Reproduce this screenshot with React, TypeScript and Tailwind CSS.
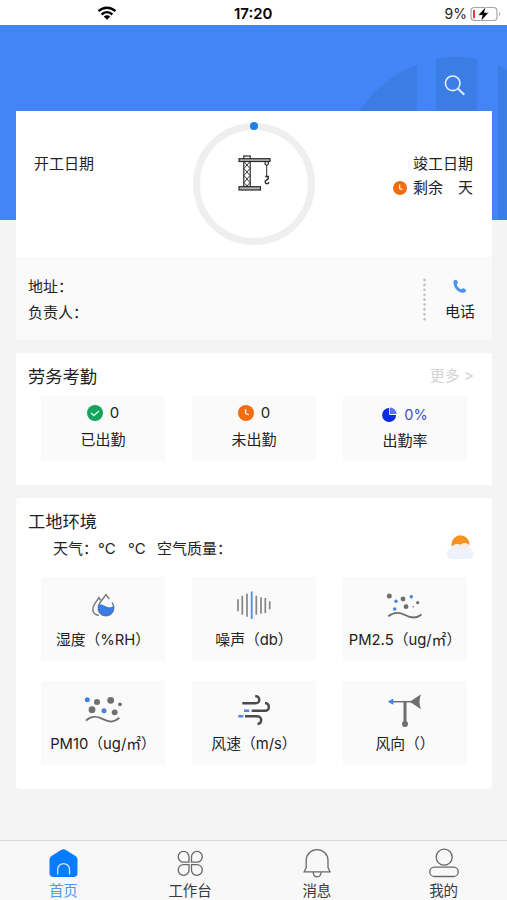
import type { ReactNode } from "react"

const GRAY = "#6f6f6f"
const BLUE = "#4680e0"

const ClockIcon = ({ size }: { size: number }) => (
  <svg width={size} height={size} viewBox="0 0 16 16" fill="none">
    <circle cx="8" cy="8" r="8" fill="#f36c12" />
    <path d="M7.6 4v4.6l3.2 1.3" stroke="#fff" strokeOpacity=".85" strokeWidth="1.5" />
  </svg>
)

const CheckIcon = () => (
  <svg width="16" height="16" viewBox="0 0 16 16" fill="none">
    <circle cx="8" cy="8" r="8" fill="#12a45f" />
    <path d="m4.2 7.9 2.6 2.6 5.2-4.6" stroke="#d9f5e6" strokeWidth="1.4" />
  </svg>
)

const PieIcon = () => (
  <svg className="-mt-[2px]" width="15" height="15" viewBox="0 0 15 15">
    <path d="M7.200 1v6.900h6.900A7 7 0 1 1 7.200 1Z" fill="#0b2fe0" />
    <path d="M8 .5a6.600 6.600 0 0 1 6.500 6.500H8Z" fill="#5a73ee" />
  </svg>
)

const CraneIcon = () => (
  <svg width="34" height="36" viewBox="0 0 34 36" fill="none" stroke="#2b2b2b" strokeWidth="1.2">
    <rect x="6.800" y="1" width="6.400" height="30.500" />
    <path d="m7 6.500 6 7-6 7 6 7-3 3.500M13 6.500l-6 7 6 7-6 7 3 3.500" strokeWidth=".9" />
    <rect x="2" y="3.700" width="31" height="2.800" fill="#b5b5b5" />
    <rect x="2" y="31.700" width="21.500" height="3.300" fill="#b5b5b5" />
    <circle cx="29.700" cy="8.300" r="1.800" />
    <path d="M29.700 10v11" strokeWidth="1" />
    <path d="M28.200 21.500h3v2.300l-2.900 2.200c-.8 3.400 3.300 3.400 3.500 1" strokeWidth="1.400" />
  </svg>
)

const HumidityIcon = () => (
  <svg width="40" height="34" viewBox="0 0 40 34" fill="none">
    <path d="M17.500 12.300 16 9.700c-2.200 3.200-6.200 7.300-6.200 11.600 0 3.200 2.300 5.700 6 5.900" stroke="#7a7a7a" strokeWidth="1.500" />
    <path d="M15.500 18c1-4 5-7.500 7.500-11.300 1.100 1.700 2.200 3 3.400 4.400M29.200 14.700c1.200 1.800 1.800 3.500 1.600 5.700" stroke="#7a7a7a" strokeWidth="1.500" />
    <path d="M14.800 17.300c2.700-1.300 5-.6 7.600.9 2.900 1.600 5.800 1.400 8.600-.8.800 6.900-3.200 10.800-8.100 10.800-5.100 0-9-4-8.100-10.900Z" fill="#3c7be6" />
    <path d="M15 21c.7 4.200 3.800 6.800 7.900 6.800s7-2.600 7.900-6.800" stroke="#5a6d94" strokeWidth="1" />
  </svg>
)

const NoiseIcon = () => (
  <svg width="40" height="34" viewBox="0 0 40 34" fill="none" stroke="#858585" strokeWidth="1.700">
    <path d="M4 11.300v12M8.300 7.800v19M13 5.800v23M22.300 7.800v19M27 9.300v16.500M31.300 10v15M35.700 13.300v8" />
    <path d="M17.700 3.500v27.500" stroke="#5b8fd8" strokeWidth="1.900" />
  </svg>
)

const Pm25Icon = () => (
  <svg width="40" height="34" viewBox="0 0 40 34" fill={GRAY}>
    <circle cx="4.300" cy="8" r="2.500" />
    <circle cx="18" cy="11" r="2.400" />
    <circle cx="32.700" cy="14.700" r="1.600" />
    <circle cx="21" cy="18.700" r="2.400" />
    <circle cx="28.300" cy="18.700" r=".8" />
    <g fill={BLUE}>
      <circle cx="11" cy="13.300" r="1.700" />
      <circle cx="26.300" cy="8.700" r="1.700" />
      <circle cx="9.700" cy="21" r="1.700" />
    </g>
    <path d="M3.300 28.300C9 23.800 14 23.800 20 27s11 4 16.500-.5" fill="none" stroke={GRAY} strokeWidth="1.900" />
  </svg>
)

const Pm10Icon = () => (
  <svg width="40" height="34" viewBox="0 0 40 34" fill={GRAY}>
    <circle cx="14" cy="10" r="3" />
    <circle cx="27.700" cy="8.300" r="3.400" />
    <circle cx="37" cy="12.300" r="1.900" />
    <circle cx="9" cy="17.700" r="3.400" />
    <circle cx="31.700" cy="20.300" r="2.900" />
    <circle cx="4.300" cy="7.700" r="2.500" fill={BLUE} />
    <circle cx="21" cy="18.700" r="2.500" fill={BLUE} />
    <path d="M3 28.700C8 23.500 13 23.700 20 27.200s11 3.300 16.300-1.500" fill="none" stroke={GRAY} strokeWidth="1.900" />
  </svg>
)

const WindIcon = () => (
  <svg width="40" height="34" viewBox="0 0 40 34" fill="none" stroke="#4a4a4a" strokeWidth="2.400">
    <path d="M8.300 11.300h13.200c5.200 0 4.900-6.800-.3-7.300M17.700 18.700H31c5.300 0 5-7.200 0-7.700M11 24.300h12.300c5.300 0 5 7.300.2 7.700" />
    <path d="M10 18.700h5.300M4.300 24.300h5" stroke="#4f86ea" />
  </svg>
)

const WindDirectionIcon = () => (
  <svg width="40" height="36" viewBox="0 0 40 36" fill={GRAY}>
    <path d="M7 9.700h20" stroke={GRAY} strokeWidth="1.500" />
    <path d="m2.800 9.700 5.500-3.100v6.200Z" fill={BLUE} />
    <path d="M24.800 9.700 36 2.200c-2 5-2 10 0 15Z" />
    <path d="M18.500 9.700h3v20h-3Z" />
    <circle cx="20" cy="32" r="3" />
  </svg>
)

const WeatherIcon = () => (
  <svg width="30" height="28" viewBox="0 0 30 28">
    <circle cx="15.500" cy="10.300" r="9" fill="#f7921e" />
    <path d="M6.500 25a5 5 0 0 1-.6-9.900c1.300-4.900 6-6 9.300-4.200 4.300-3.800 10.600-1 10.500 4.200A5.200 5.200 0 0 1 23.500 25Z" fill="#edf2fb" />
    <path d="M10.500 10.800c1.700-.5 3.400-.4 4.700.1 3.200-2.600 7.300-2 9.200.3-1 3-4.800 3.700-7.400 4.200-2-.3-5-2-6.500-4.600Z" fill="#fbeae1" />
  </svg>
)

const attendance = [
  { label: "已出勤", value: "0", icon: <CheckIcon /> },
  { label: "未出勤", value: "0", icon: <ClockIcon size={16} /> },
]

const environment = [
  { label: "湿度（%RH）", icon: <HumidityIcon /> },
  { label: "噪声（db）", icon: <NoiseIcon /> },
  { label: "PM2.5（ug/㎡）", icon: <Pm25Icon /> },
  { label: "PM10（ug/㎡）", icon: <Pm10Icon /> },
  { label: "风速（m/s）", icon: <WindIcon /> },
  { label: "风向（）", icon: <WindDirectionIcon /> },
]

const StatusBar = () => (
  <div className="flex h-[25px] items-center bg-white pl-[97px] pr-[6px] text-black">
    <svg width="20" height="14" viewBox="0 0 20 14" fill="none" stroke="#000" strokeWidth="2.400">
      <path d="M1.500 5.200c5-4.700 12-4.700 17 0M4.600 8.500c3.200-3 7.600-3 10.800 0" />
      <path d="M10 13.800 6.700 10.500c2-1.700 4.600-1.700 6.600 0Z" fill="#000" stroke="none" />
    </svg>
    <span className="ml-[117px] mt-[2px] text-[15px] font-semibold leading-none">17:20</span>
    <span className="ml-auto mr-[3px] mt-[3px] text-[14px] leading-none text-[#222]">9%</span>
    <svg className="mt-[2px]" width="31" height="16" viewBox="0 0 31 16" fill="none">
      <rect x="1" y="1.500" width="26" height="13" rx="3.500" stroke="#a5a5a5" strokeWidth="1.200" />
      <path d="M29 6v4c1.500-.8 1.500-3.200 0-4Z" fill="#a5a5a5" />
      <rect x="3" y="3.700" width="2" height="8.600" rx=".8" fill="#f0353c" />
      <path d="M15.800.8 8 9.300h4.400L10.600 15.400l8.200-8.800h-4.400Z" fill="#000" stroke="#fff" strokeWidth=".6" />
    </svg>
  </div>
)

const Header = () => (
  <header className="relative h-[195px] overflow-hidden bg-[#4285f6]">
    <svg className="absolute inset-0" width="507" height="195" viewBox="0 25 507 195" fill="#3c7ce5">
      <path d="M417 65a116 116 0 0 0-76 108h76ZM436 59c14-3 27-3 41 0v161h-41ZM498 65l9 5v150h-9Z" />
    </svg>
    <svg className="absolute left-[443px] top-[49px]" width="24" height="24" viewBox="0 0 24 24" fill="none" stroke="#e3f0ff" strokeWidth="1.600">
      <circle cx="9.700" cy="9.300" r="7.300" />
      <path d="m14.800 14.500 6.500 6.200" strokeWidth="1.900" />
    </svg>
  </header>
)

const Tile = ({ children }: { children: ReactNode }) => (
  <div className="flex w-[124px] flex-col items-center whitespace-nowrap bg-[#fafafa]">{children}</div>
)

const Tab = ({ label, active, children }: { label: string; active?: boolean; children: ReactNode }) => (
  <div className="flex flex-1 flex-col items-center pt-[6px]">
    <svg className="shrink-0" width="32" height="32" viewBox="0 0 32 32" fill="none" stroke="#686868" strokeWidth="1.300">
      {children}
    </svg>
    <span className={active ? "mt-[2px] text-[14.500px] leading-[20px] text-[#4a98ee]" : "mt-[2px] text-[14.500px] leading-[20px] text-[#3a3a3a]"}>{label}</span>
  </div>
)

export default function App() {
  return (
    <div lang="zh-CN" className="flex h-[900px] w-[507px] flex-col overflow-hidden bg-[#f4f4f4] font-[Inter,'Noto_Sans_CJK_SC',sans-serif] text-[15px] text-[#222]">
      <StatusBar />
      <Header />

      <main className="relative -mt-[109px] flex flex-1 flex-col gap-[13px] pl-4 pr-[15px]">
        {/* Project */}
        <section className="h-[229px] bg-[#fafafa]">
          <div className="flex h-[146px] justify-between bg-white pl-[18px] pr-[19px]">
            <div className="w-[82px] pt-[42px] leading-[22px]">开工日期</div>
            <div className="relative ml-[18px] mt-3 flex h-[122px] w-[122px] justify-center rounded-full border-[7px] border-[#efefef] pt-[25px]">
              <CraneIcon />
              <div className="absolute -top-[8px] left-[50px] h-2 w-2 rounded-full bg-[#1f80e0]" />
            </div>
            <div className="flex w-[100px] flex-col items-end pt-[42px] leading-[22px]">
              <div>竣工日期</div>
              <div className="mt-[2px] flex items-center gap-[6px]">
                <ClockIcon size={14} />
                <span>剩余　天</span>
              </div>
            </div>
          </div>
          <div className="flex h-[83px] justify-between pl-3 pr-[17px]">
            <div className="pt-[17px] leading-[26px]">
              <div>地址：</div>
              <div>负责人：</div>
            </div>
            <div className="flex gap-[19px]">
              <svg className="mt-[21px]" width="3" height="44" viewBox="0 0 3 44">
                <path d="M1.500 2v41" stroke="#bdbdbd" strokeWidth="2.600" strokeLinecap="round" strokeDasharray="0 4.900" />
              </svg>
              <div className="flex flex-col items-center pt-[22px]">
                <svg width="15" height="15" viewBox="0 0 15 15">
                  <path d="M1.800 1.600C3.700-.1 4.800.9 5.700 2.800c.7 1.500-1 2-1 3 .7 1.900 2.300 3.600 4.200 4.400 1.100.1 1.700-1.600 3.200-.8 2.200 1.200 2.800 2.300.8 3.800C7.500 16 0 7.800 1.800 1.600Z" fill="#4a93ee" />
                </svg>
                <span className="mt-[7px] leading-[22px]">电话</span>
              </div>
            </div>
          </div>
        </section>

        {/* Attendance */}
        <section className="h-[132px] bg-white">
          <div className="flex justify-between pl-3 pr-[18px] pt-[12px] leading-[24px]">
            <h2 className="text-[17.300px]">劳务考勤</h2>
            <span className="-mt-[1px] text-[#d4d4d4]">更多 &gt;</span>
          </div>
          <div className="mt-[7px] flex h-[65px] justify-between px-[25px]">
            {attendance.map((item) => (
              <Tile key={item.label}>
                <div className="flex items-center gap-[7px] pt-[6px] leading-[22px]">
                  {item.icon}
                  <span>{item.value}</span>
                </div>
                <div className="mt-[5px] leading-[22px]">{item.label}</div>
              </Tile>
            ))}
            <Tile>
              <div className="flex items-center gap-[7px] pt-[8px] leading-[22px] text-[#3850cf]">
                <PieIcon />
                <span className="text-[14.500px]">0%</span>
              </div>
              <div className="mt-[4px] leading-[22px]">出勤率</div>
            </Tile>
          </div>
        </section>

        {/* Environment */}
        <section className="h-[291px] rounded bg-white">
          <h2 className="pl-3 pt-[12px] text-[17.300px] leading-[24px]">工地环境</h2>
          <div className="flex h-[31px] justify-between pl-[37px] pr-[17px]">
            <div className="flex whitespace-pre pt-[4px] leading-[22px]">
              <span>天气：</span>
              <span className="w-[30px]">°C</span>
              <span className="w-[29px]">°C</span>
              <span>空气质量：</span>
            </div>
            <WeatherIcon />
          </div>
          <div className="mt-[12px] flex flex-wrap justify-between gap-y-5 px-[25px]">
            {environment.map((item) => (
              <Tile key={item.label}>
                <div className="h-[84px] pt-[11px]">
                  <div className="flex h-[34px] justify-center">{item.icon}</div>
                  <div className="mt-[7px] text-[14.800px] leading-[22px]">{item.label}</div>
                </div>
              </Tile>
            ))}
          </div>
        </section>
      </main>

      <nav className="flex h-[60px] shrink-0 border-t border-[#d9d9d9] bg-[#f8f8f8]">
        <Tab label="首页" active>
          <path d="M14.500 2.800q2-1.200 4 0l10 6.200q2 1.400 2 3.500V26q0 4-4 4h-20q-4 0-4-4V12.500q0-2.100 2-3.500Z" fill="#087cff" stroke="none" />
          <path d="M10.700 27.500v-5a5.900 5.900 0 0 1 11.800 0v5" stroke="#cfe6ff" />
        </Tab>
        <Tab label="工作台">
          <path d="M15 15.200H9.700a5.400 5.400 0 1 1 5.300-5.400ZM17.500 15.200V9.800a5.400 5.400 0 1 1 5.300 5.400ZM15 17.600v5.300a5.400 5.400 0 1 1-5.300-5.300ZM17.500 17.600h5.300a5.400 5.400 0 1 1-5.300 5.300Z" />
        </Tab>
        <Tab label="消息">
          <path d="M5.200 20.500V13.500a10.900 10.900 0 0 1 21.800 0v7l2 4.300H3.200ZM12.200 24.800c0 6.800 8 6.800 8 0" />
        </Tab>
        <Tab label="我的">
          <circle cx="16.200" cy="10.200" r="8" />
          <rect x="1.800" y="20.200" width="28.400" height="9.300" rx="4.600" />
        </Tab>
      </nav>
    </div>
  )
}
